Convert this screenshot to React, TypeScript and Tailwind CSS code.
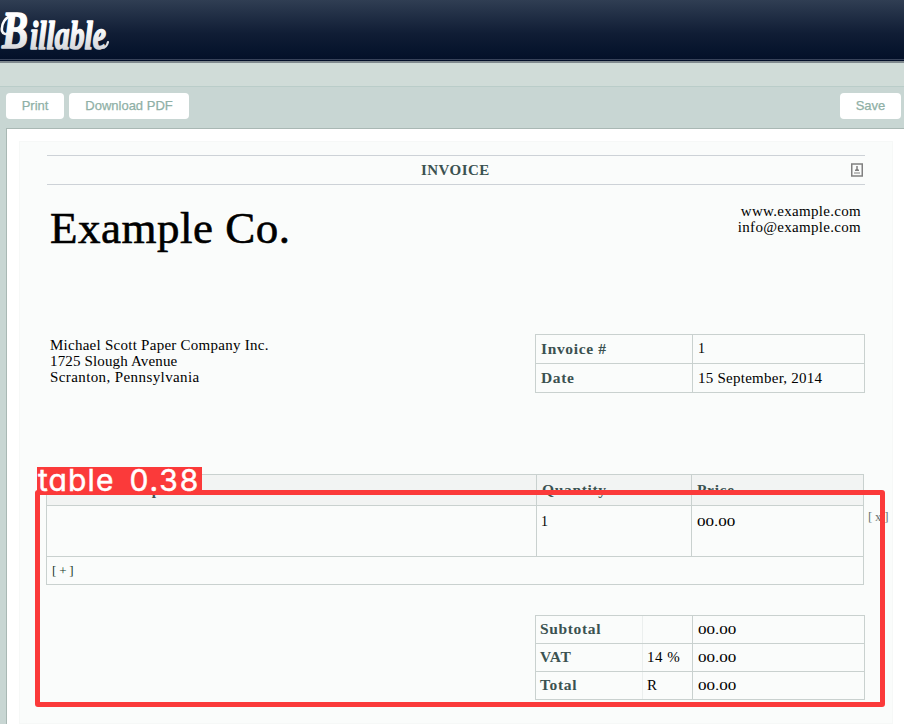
import React from "react";

const serif = "font-['Liberation_Serif',serif]";

function ToolButton({ className, children }: { className: string; children: React.ReactNode }) {
  return (
    <button
      className={`h-[26px] rounded-[4px] bg-white text-[13px] text-[#8fb0a6] [-webkit-text-stroke:0.25px_#8fb0a6] font-['Liberation_Sans',sans-serif] ${className}`}
    >
      {children}
    </button>
  );
}

function Zeros() {
  return <span className="inline-block origin-left scale-x-[1.42] text-[12px]">00.00</span>;
}

const label = "font-bold text-[#3b5251] text-[15.5px] tracking-[0.65px]";

function Total({ name, unit }: { name: string; unit: React.ReactNode }) {
  return (
    <div className="flex h-7 border-b border-[#c9d1cf] leading-[26px]">
      <div className={`w-[107px] border-r border-[#ebefee] pl-1 ${label}`}>{name}</div>
      <div className="w-[50px] border-r border-[#c9d1cf] pl-[4px] text-[15px] leading-[27px]">{unit}</div>
      <div className="pl-[5px]">
        <Zeros />
      </div>
    </div>
  );
}

function Logo() {
  return (
    <svg width="124" height="60" viewBox="0 0 124 60" className="block overflow-visible" aria-label="Billable">
      <defs>
        <linearGradient id="silver" x1="0" y1="10" x2="0" y2="52" gradientUnits="userSpaceOnUse">
          <stop offset="0.4" stopColor="#ffffff" />
          <stop offset="1" stopColor="#d0d2d6" />
        </linearGradient>
      </defs>
      <g
        fill="url(#silver)"
        stroke="url(#silver)"
        strokeWidth="1.6"
        strokeLinejoin="round"
        fontFamily="Liberation Serif, serif"
        fontStyle="italic"
        fontWeight="bold"
      >
        <text x="2" y="48" fontSize="52" textLength="26" lengthAdjust="spacingAndGlyphs">B</text>
        <text x="30" y="49" fontSize="41" textLength="76" lengthAdjust="spacingAndGlyphs">illable</text>
      </g>
      <g fill="none" stroke="url(#silver)" strokeLinecap="round">
        <path d="M13 15C5 17 1 24 2 31c1 3 4 4 7 2" strokeWidth="2.6" />
        <path d="M102 48c3 0 5-2 6-6" strokeWidth="2.2" />
      </g>
    </svg>
  );
}

export default function App() {
  return (
    <div className={`relative h-[724px] w-[904px] overflow-hidden bg-[#c8d6d3] text-black ${serif}`}>
      <header className="h-[63px] border-b-2 border-[#7f898e] bg-linear-to-b from-[#303e53] via-[#101d35] via-55% to-[#030f28]">
        <div className="h-[60px] border-b border-[#38435a]">
          <Logo />
        </div>
      </header>
      <div className="h-6 border-b border-[#bacdc9] bg-[#d0dcd8]" />
      <div className="flex h-[41px] items-start gap-[5px] pt-1.5 pr-[3px] pl-1.5">
        <ToolButton className="w-[58px]">Print</ToolButton>
        <ToolButton className="w-[120px]">Download PDF</ToolButton>
        <ToolButton className="ml-auto w-[61px]">Save</ToolButton>
      </div>

      <main className="ml-1.5 h-[596px] border-t border-l border-[#a9b8b4] bg-white pt-3 pl-3">
        <section className="h-[583px] w-[874px] border border-[#f6f8f7] bg-[#fafcfb] pt-[13px] pl-[27px]">
          <div className="flex h-[30px] w-[818px] items-center border-y border-[#cdd2d7] pl-[374px]">
            <h1 className="w-[70px] text-[15px] font-bold tracking-[0.45px] text-[#3b5251]">INVOICE</h1>
            <svg className="ml-[360px]" width="12" height="14" viewBox="0 0 12 14" fill="none">
              <rect x="0.75" y="1" width="10.5" height="12" stroke="#808080" strokeWidth="1.5" />
              <path d="M6 3v3" stroke="#808080" strokeWidth="1.5" />
              <path d="M4 7.5h4M3 10h6" stroke="#808080" strokeWidth="1.2" />
              <path d="M4 6h4L6 8z" fill="#808080" />
            </svg>
          </div>

          <div className="flex h-[149px] w-[814px] justify-between pt-[18px] pl-[3px]">
            <div className="text-[45px] leading-[50px] tracking-[0.5px] [-webkit-text-stroke:0.6px_black]">Example Co.</div>
            <div className="text-right text-[15px] leading-4 tracking-[0.3px]">
              <div>www.example.com</div>
              <div>info@example.com</div>
            </div>
          </div>

          <div className="flex h-[140px] w-[818px] justify-between">
            <address className="pt-[3px] pl-[3px] text-[15px] leading-4 not-italic">
              <div className="tracking-[0.26px]">Michael Scott Paper Company Inc.</div>
              <div className="tracking-[0.15px]">1725 Slough Avenue</div>
              <div className="tracking-[0.4px]">Scranton, Pennsylvania</div>
            </address>
            <div className="h-[59px] w-[330px] border border-[#c9d1cf] text-[15px] leading-[28px]">
              <div className="flex h-[29px] border-b border-[#c9d1cf]">
                <div className={`w-[157px] border-r border-[#c9d1cf] pl-[5px] ${label}`}>Invoice #</div>
                <div className="pl-[5px] text-[14px] leading-[28px]">1</div>
              </div>
              <div className="flex h-7">
                <div className={`w-[157px] border-r border-[#c9d1cf] pl-[5px] ${label}`}>Date</div>
                <div className="pl-[5px] tracking-[0.25px]">15 September, 2014</div>
              </div>
            </div>
          </div>

          <div className="-ml-px h-[111px] w-[818px] border border-[#c9d1cf]">
            <div className={`flex h-[31px] border-b border-[#c9d1cf] bg-[#f2f4f3] leading-[30px] ${label}`}>
              <div className="w-[490px] border-r border-[#c9d1cf] pl-[5px] tracking-[0.4px]">Service Description</div>
              <div className="w-[155px] border-r border-[#c9d1cf] pl-[5px]">Quantity</div>
              <div className="pl-[5px]">Price</div>
            </div>
            <div className="flex h-[51px] border-b border-[#c9d1cf] leading-[31px]">
              <div className="w-[490px] shrink-0 border-r border-[#c9d1cf]" />
              <div className="w-[155px] shrink-0 border-r border-[#c9d1cf] pl-1 text-[14px]">1</div>
              <div className="w-[171px] shrink-0 pl-[5px] leading-[30px]">
                <Zeros />
              </div>
              <div className="shrink-0 pl-[5px] text-[13px] leading-[21px] tracking-[-0.3px] text-[#68716f]">[ x ]</div>
            </div>
            <div className="pl-[5px] text-[13px] leading-[28px] tracking-[-0.2px] text-[#173528]">[ + ]</div>
          </div>

          <div className="mt-[30px] ml-[488px] w-[330px] border-x border-t border-[#c9d1cf]">
            <Total name="Subtotal" unit="" />
            <Total name="VAT" unit={<span className="tracking-[0.5px]">14 %</span>} />
            <Total name="Total" unit="R" />
          </div>
        </section>
      </main>

      <div className="absolute top-[490px] left-[35px] h-[217px] w-[850px] rounded-[3px] border-5 border-[#fb3a3a]" />
      <div className="absolute top-[467px] left-[37px] h-[28px] w-[165px] bg-[#fb3a3a] pl-px text-[30px] leading-[27px] whitespace-pre text-white font-['Inter',sans-serif] [font-feature-settings:'cv11'] [-webkit-text-stroke:0.5px_white]">
        <span className="tracking-[1.1px]">table</span>
        <span className="ml-[15px] tracking-[1.9px]">0.38</span>
      </div>
    </div>
  );
}
